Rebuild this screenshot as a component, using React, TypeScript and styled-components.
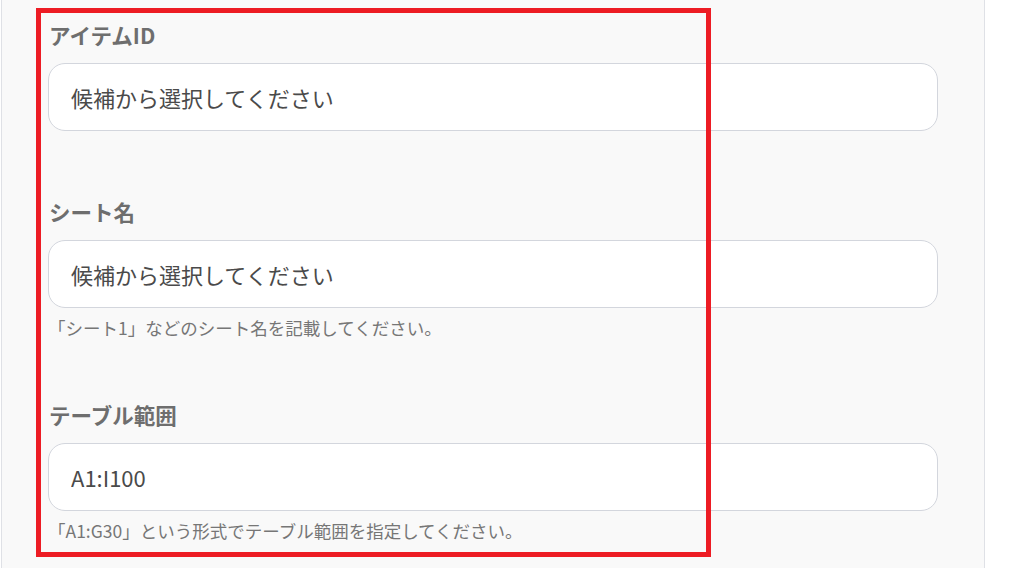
import React from 'react';
import styled, { createGlobalStyle } from 'styled-components';

const GlobalStyle = createGlobalStyle`
    html, body {
        margin: 0;
        padding: 0;
        background: #ffffff;
        font-family: "Noto Sans CJK JP", "Noto Sans", sans-serif;
    }
`

type FieldDef = {
    label: string;
    placeholder?: string;
    value?: string;
    hint?: string;
}

const fields: FieldDef[] = [
    { label: 'アイテムID', placeholder: '候補から選択してください' },
    { label: 'シート名', placeholder: '候補から選択してください', hint: '「シート1」などのシート名を記載してください。' },
    { label: 'テーブル範囲', value: 'A1:I100', hint: '「A1:G30」という形式でテーブル範囲を指定してください。' },
]

export default function App() {
    return (
        <Page>
            <GlobalStyle />
            <Panel>
                <Form>
                    {fields.map((field, i) => (
                        <Field key={i} $trail={field.hint ? 0 : 6}>
                            <Label>{field.label}</Label>
                            <TextBox
                                placeholder={field.placeholder}
                                defaultValue={field.value}
                            />
                            {field.hint && <Hint>{field.hint}</Hint>}
                        </Field>
                    ))}
                </Form>
            </Panel>
            <Highlight />
        </Page>
    )
}

const Page = styled.div`
    position: relative;
    width: 1019px;
    height: 568px;
    overflow: hidden;
    display: flex;
    padding-left: 1px;
    box-sizing: border-box;
`

const Panel = styled.div`
    width: 984px;
    height: 100%;
    box-sizing: border-box;
    background: #f9f9f9;
    border-left: 1px solid #dfe1e6;
    border-right: 1px solid #dfe1e6;
    padding: 21px 46px 0 46px;
`

const Form = styled.div`
    display: flex;
    flex-direction: column;
    gap: 61px;
`

const Field = styled.div<{$trail: number}>`
    display: flex;
    flex-direction: column;
    padding-bottom: ${props => props.$trail}px;
`

const Label = styled.div`
    font-size: 21.5px;
    line-height: 28px;
    font-weight: 700;
    color: #6e6e6e;
    margin-bottom: 14px;
    padding-left: 1px;
`

const TextBox = styled.input`
    height: 68px;
    box-sizing: border-box;
    border: 1px solid #d3d6dd;
    border-radius: 17px;
    background: #ffffff;
    padding: 0 22px;
    font-family: "Noto Sans CJK JP", "Noto Sans", sans-serif;
    font-size: 22px;
    color: #4a4a4a;
    outline: none;

    &::placeholder {
        color: #4a4a4a;
        opacity: 1;
    }
`

const Hint = styled.div`
    margin-top: 8px;
    font-size: 17.5px;
    line-height: 24px;
    color: #767676;
`

const Highlight = styled.div`
    position: absolute;
    left: 36px;
    top: 8px;
    width: 675px;
    height: 549px;
    box-sizing: border-box;
    border: 5px solid #ed1c24;
    pointer-events: none;
`
